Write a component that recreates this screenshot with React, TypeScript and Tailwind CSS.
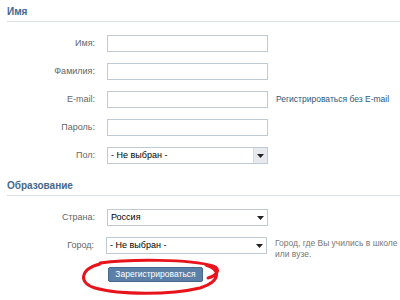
import React from 'react';

const font = { fontFamily: '"Liberation Sans", Arial, sans-serif' };

const Arrow = () => (
  <svg width="7" height="4" viewBox="0 0 7 4" className="block">
    <path d="M0 0h7L3.5 4z" fill="#222" />
  </svg>
);

const Row = ({ label, children }: { label: string; children: React.ReactNode }) => (
  <div className="flex items-start h-[17px]">
    <label className="w-[88px] h-[17px] flex items-center justify-end text-[9px] text-[#666]">{label}</label>
    <div className="ml-[12px] flex items-start">{children}</div>
  </div>
);

const Input = () => <div className="w-[161px] h-[17px] border border-[#c0cad5] bg-white" />;

const Select = ({ value, box }: { value: string; box?: boolean }) => (
  <div className="w-[161px] h-[17px] border border-[#c0cad5] bg-white flex items-center">
    <span className="flex-1 pl-[3px] text-[9px] text-black">{value}</span>
    {box ? (
      <span className="w-[14px] h-full bg-[#e6eaee] border-l border-[#d5dbe2] flex items-center justify-center">
        <Arrow />
      </span>
    ) : (
      <span className="w-[14px] h-full flex items-center justify-center">
        <Arrow />
      </span>
    )}
  </div>
);

export default function App() {
  return (
    <div className="relative w-[400px] h-[300px] bg-white overflow-hidden" style={font}>
      <div className="pl-[7px]">
        <h2 className="mt-[6px] pb-[3px] leading-[12px] border-b border-[#dae1e8] text-[10px] font-bold text-[#45688e]">
          Имя
        </h2>
        <div className="mt-[13px] flex flex-col gap-[11px]">
          <Row label="Имя:">
            <Input />
          </Row>
          <Row label="Фамилия:">
            <Input />
          </Row>
          <Row label="E-mail:">
            <Input />
            <a className="ml-[8px] h-[17px] flex items-center text-[8.5px] text-[#2b587a]">Регистрироваться без E-mail</a>
          </Row>
          <Row label="Пароль:">
            <Input />
          </Row>
          <Row label="Пол:">
            <Select value="- Не выбран -" box />
          </Row>
        </div>

        <h2 className="mt-[16px] pb-[3px] leading-[12px] border-b border-[#dae1e8] text-[10px] font-bold text-[#45688e]">
          Образование
        </h2>
        <div className="mt-[13px] flex flex-col gap-[11px]">
          <Row label="Страна:">
            <Select value="Россия" />
          </Row>
          <Row label="Город:">
            <Select value="- Не выбран -" />
            <p className="ml-[8px] mt-[1px] w-[125px] text-[8.5px] leading-[11px] text-[#777]">
              Город, где Вы учились в школе или вузе.
            </p>
          </Row>
        </div>
        <div className="mt-[13px] pl-[101px] flex">
          <button className="w-[95px] h-[15px] rounded-[2px] bg-[#5b7fa6] border border-[#45688e] text-white text-[8.5px] leading-none">
            Зарегистрироваться
          </button>
        </div>
      </div>

      <svg className="absolute left-0 top-0 pointer-events-none" width="400" height="300">
        <path
          d="M100 263 C130 259 190 259 213 266 C222 269 216 276 208 278 M206 265 C220 269 222 281 200 288 C170 295 120 295 95 288 C78 283 80 269 100 264"
          fill="none"
          stroke="#e8141c"
          strokeWidth="3"
          strokeLinecap="round"
        />
      </svg>
    </div>
  );
}
